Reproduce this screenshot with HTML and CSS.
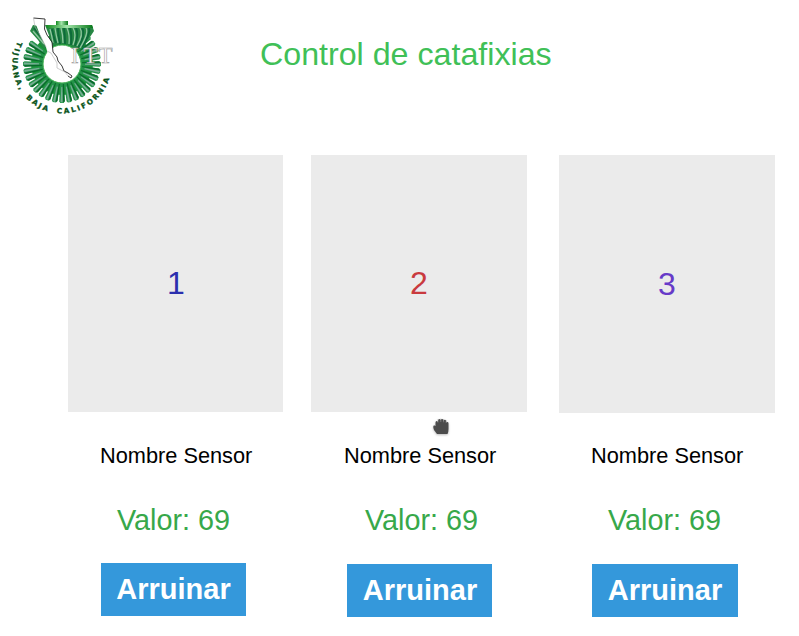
FILE: index.html
```html
<!DOCTYPE html>
<html lang="es">
<head>
<meta charset="utf-8">
<title>Control de catafixias</title>
<link rel="stylesheet" href="styles.css">
</head>
<body>
<header class="header">
  <svg class="logo" viewBox="0 0 125 125" role="img" aria-label="ITT Tijuana, Baja California">
    <defs>
      <linearGradient id="rim" x1="0" x2="1" y1="0" y2="0">
        <stop offset="0" stop-color="#118a1d"/><stop offset=".45" stop-color="#a5e5ac"/><stop offset="1" stop-color="#087919"/>
      </linearGradient>
      <g id="tooth">
        <path d="M60.2 82L59.2 101.5L60.3 103H63.6L64.8 101.5L63.8 82Z" fill="#25944a"/>
        <path d="M61.3 87L60.6 102L62.6 102.5L62.4 87Z" fill="#77ac94"/>
        <path d="M62.8 84L63.2 102.5L64.8 101L63.8 84Z" fill="#0a682c"/>
      </g>
      <g id="teeth3">
        <use href="#tooth"/><use href="#tooth" transform="rotate(11.25 62 64)"/><use href="#tooth" transform="rotate(22.5 62 64)"/>
      </g>
      <g id="teeth9">
        <use href="#teeth3"/><use href="#teeth3" transform="rotate(33.75 62 64)"/><use href="#teeth3" transform="rotate(67.5 62 64)"/>
      </g>
      <path id="arc" d="M17.9 41.5A49.5 49.5 0 1 0 111.5 64A49.5 49.5 0 0 0 100 32"/>
    </defs>
    <circle cx="62" cy="64" r="25" fill="none" stroke="#159331" stroke-width="12"/>
    <use href="#teeth3" transform="rotate(-135 62 64)"/>
    <use href="#teeth9" transform="rotate(-101.25 62 64)"/>
    <use href="#teeth9" transform="rotate(0 62 64)"/>
    <use href="#teeth3" transform="rotate(101.25 62 64)"/>
    <path class="rim" d="M56 21H68V26H56Z"/>
    <path d="M33 25L38 26L51 44L44 49L38 40L30 31ZM45 25H92L94 31L86 43L79 51Q70 44 62 44L53 46Z" fill="#278744"/>
    <path class="ridges" d="M34 28L47 44M39 29L50 43M52 29Q53 36 56 43M58 28Q58 35 60 44M64 28Q65 35 65 44M70 28Q72 35 71 45M76 28Q79 34 75 46M82 28Q86 34 78 48M89 28Q91 33 82 47"/>
    <path class="ridge-lights" d="M33 31L44 44M50 29Q52 36 53 43M55 28Q56 35 58 43M61 28Q63 35 63 43M67 28Q70 35 69 44M73 28Q77 34 73 45M80 28Q84 34 77 46M86 28Q89 33 80 48"/>
    <path class="rim" d="M46 25H92L93 28H47Z"/>
    <circle class="hub" cx="62" cy="64" r="19"/>
    <path class="peninsula-fill" d="M33.5 18L45 19L45 31L52 43L53 53L66 66L71 77L67 76L56 67L48 55L46 47L40 35Z"/>
    <path class="coast" d="M33.5 18L45 19L44.5 29L47 35L52 42L53 52L57 57L58 61L62 66L64 71L68 73L72 76L71 78L68 76"/>
    <path class="coast-light" d="M33.5 18L35 27L40 35L46 47M47 51L51 53L57 63L57 68L65 72L68 76"/>
    <text class="initials" x="71 83.5 98.5" y="63">ITT</text>
    <text class="place"><textPath href="#arc">TIJUANA, BAJA CALIFORNIA</textPath></text>
  </svg>
  <h1 class="title">Control de catafixias</h1>
</header>
<main class="sensors">
  <section class="sensor first">
    <div class="tile">1</div>
    <p class="name">Nombre Sensor</p>
    <p class="value">Valor: 69</p>
    <button class="button">Arruinar</button>
  </section>
  <section class="sensor second">
    <div class="tile">2</div>
    <p class="name">Nombre Sensor</p>
    <p class="value">Valor: 69</p>
    <button class="button">Arruinar</button>
  </section>
  <section class="sensor third">
    <div class="tile">3</div>
    <p class="name">Nombre Sensor</p>
    <p class="value">Valor: 69</p>
    <button class="button">Arruinar</button>
  </section>
</main>
<svg class="hand" viewBox="0 0 20 20" aria-hidden="true">
  <path d="M6 17L3 13Q1.5 9.5 3 8.3L4.5 9V5.5Q4.5 4 5.7 4Q7 4 7 5.5V3.5Q7 2 8.4 2Q9.8 2 9.8 3.5V5V3.2Q9.8 2 11.2 2Q12.6 2 12.6 3.5V5.5V4Q12.8 2.7 14 2.7Q15.2 2.7 15.2 4.5V6V5.3Q17.5 4.5 17.5 6.5V12Q17.5 15 16.5 17Z"/>
  <path class="knuckles" d="M7 2V5.5M9.8 1.5V5M12.6 2V5.3M15.2 3V6"/>
</svg>
</body>
</html>
```
FILE: styles.css
```css
* { box-sizing: border-box; }
body {
  margin: 0;
  width: 799px;
  height: 636px;
  overflow: hidden;
  background: #fff;
  font-family: "Liberation Sans", Arial, sans-serif;
}
.header { display: flex; height: 155px; }
.logo { flex: none; width: 125px; height: 125px; }
.title {
  margin: 35px 0 0 135px;
  color: #40c057;
  font-size: 32.2px;
  font-weight: 400;
  line-height: 38px;
  white-space: nowrap;
}
.rim { fill: url(#rim); }
.ridges { fill: none; stroke: #0d6b3a; stroke-width: 1.9; }
.ridge-lights { fill: none; stroke: #8fc6a0; stroke-width: 1.3; }
.hub { fill: #fff; stroke: #40ad50; stroke-width: 1; }
.peninsula-fill { fill: #fff; }
.coast { fill: none; stroke: #252525; stroke-width: .9; }
.coast-light { fill: none; stroke: #aaa; stroke-width: .6; }
.initials { font: 23px "Liberation Serif", serif; fill: #fff; stroke: #999; stroke-width: .6; }
.place { font: bold 7.2px "DejaVu Sans", sans-serif; letter-spacing: 2.1px; word-spacing: 3px; fill: #075319; stroke: #075319; stroke-width: .3; }
.sensors { display: flex; align-items: flex-start; padding-left: 68px; }
.sensor { flex: none; width: 216px; }
.first { width: 215px; margin-right: 28px; }
.second { margin-right: 32px; }
.tile {
  display: flex;
  align-items: center;
  justify-content: center;
  height: 257px;
  background: #ebebeb;
  font-size: 32px;
}
.first .tile { padding-left: 1px; color: #2b2fae; }
.second .tile { color: #c93a3e; }
.third .tile { height: 258px; color: #673ac8; }
.name, .value { margin: 0; white-space: nowrap; }
.name { margin: 30px 0 0 32px; font-size: 21.75px; line-height: 28px; color: #000; }
.value { margin: 32px 0 0 49px; font-size: 28.8px; line-height: 36px; color: #37a84a; }
.button {
  display: block;
  width: 145px;
  height: 53px;
  margin: 25px 0 0 33px;
  padding: 0;
  border: 0;
  background: #3498db;
  color: #fff;
  font: bold 29px/53px "Liberation Sans", Arial, sans-serif;
}
.second .name { margin-left: 33px; }
.second .value { margin-left: 54px; }
.second .button { margin: 26px 0 0 36px; padding-left: 1px; }
.third .name { margin: 29px 0 0 32px; }
.third .button { width: 146px; margin-top: 26px; }
.hand {
  position: absolute;
  left: 431px;
  top: 417px;
  width: 20px;
  height: 20px;
  fill: #4c4c4c;
  filter: drop-shadow(0 1px 1px #bbb);
}
.knuckles { fill: none; stroke: #aaa; stroke-width: .5; }
```
